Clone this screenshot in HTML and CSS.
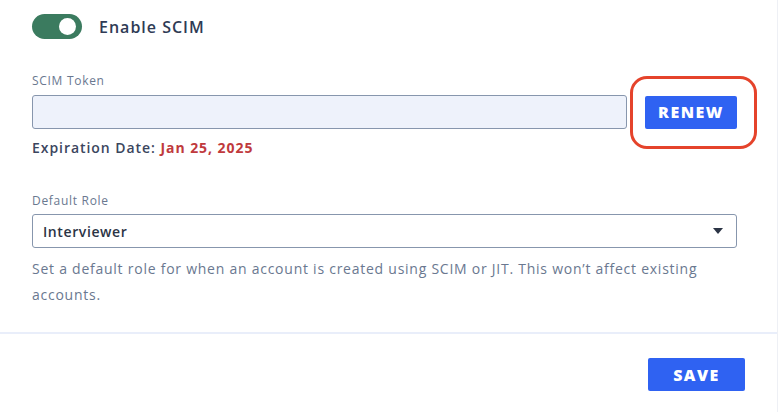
FILE: index.html
```html
<!DOCTYPE html>
<html lang="en">
<head>
<meta charset="utf-8">
<title>SCIM Settings</title>
<link rel="stylesheet" href="styles.css">
</head>
<body>
<div class="panel">
  <section class="body">
    <div class="toggle-row">
      <span class="switch"><span class="knob"></span></span>
      <span class="toggle-label">Enable SCIM</span>
    </div>

    <div class="field token-field">
      <label class="field-label">SCIM Token</label>
      <div class="token-row">
        <div class="token-input"></div>
        <div class="renew-wrap">
          <button class="btn btn-renew">RENEW</button>
          <span class="highlight"></span>
        </div>
      </div>
      <div class="expiry">Expiration Date: <span class="expiry-date">Jan 25, 2025</span></div>
    </div>

    <div class="field role-field">
      <label class="field-label">Default Role</label>
      <div class="select">
        <span class="select-value">Interviewer</span>
        <svg class="caret" width="10" height="6" viewBox="0 0 10 6"><path d="M0 0h10L5 6z" fill="#2b3445"/></svg>
      </div>
      <p class="help">Set a default role for when an account is created using SCIM or JIT. This won’t affect existing accounts.</p>
    </div>
  </section>
  <footer class="footer">
    <button class="btn btn-save">SAVE</button>
  </footer>
</div>
</body>
</html>
```

FILE: styles.css
```css
html, body {
  margin: 0;
  padding: 0;
  background: #ffffff;
}

body {
  font-family: "Open Sans", "Lato", sans-serif;
  color: #2f3b55;
}

.panel {
  width: 778px;
  height: 412px;
  border-right: 1px solid #eef0f5;
  box-sizing: border-box;
  display: flex;
  flex-direction: column;
}

.body {
  padding: 14px 40px 24px 32px;
  border-bottom: 2px solid #e9eefa;
}

/* toggle */
.toggle-row {
  display: flex;
  align-items: center;
  height: 25px;
}

.switch {
  width: 50px;
  height: 25px;
  border-radius: 13px;
  background: #3b7b5f;
  display: flex;
  align-items: center;
  justify-content: flex-end;
  padding-right: 6px;
  box-sizing: border-box;
}

.knob {
  width: 17px;
  height: 17px;
  border-radius: 50%;
  background: #ffffff;
}

.toggle-label {
  margin-left: 17px;
  font-size: 16px;
  font-weight: 600;
  color: #2f3b55;
  letter-spacing: 1px;
}

/* fields */
.token-field {
  margin-top: 35px;
}

.field-label {
  display: block;
  font-size: 12px;
  color: #6a7890;
  letter-spacing: 0.7px;
  line-height: 14px;
}

.token-row {
  display: flex;
  align-items: center;
  margin-top: 7px;
}

.token-input {
  width: 595px;
  height: 34px;
  box-sizing: border-box;
  background: #eef2fb;
  border: 1px solid #8796ad;
  border-radius: 3px;
}

.renew-wrap {
  margin-left: 18px;
  position: relative;
}

/* outline drawn around the renew button */
.highlight {
  position: absolute;
  left: -15px;
  right: -20px;
  top: -20px;
  bottom: -20px;
  border: 3px solid #e5432b;
  border-radius: 17px;
  pointer-events: none;
}

.btn {
  font-family: "Open Sans", "Lato", sans-serif;
  font-weight: 800;
  color: #ffffff;
  background: #2f62f2;
  border: none;
  border-radius: 2px;
  letter-spacing: 1.5px;
  cursor: pointer;
  padding: 0;
}

.btn-renew {
  display: block;
  width: 92px;
  height: 33px;
  font-size: 16px;
}

.expiry {
  margin-top: 10px;
  font-size: 14px;
  line-height: 18px;
  font-weight: 600;
  color: #3b465e;
  letter-spacing: 0.95px;
}

.expiry-date {
  color: #c03a3d;
  font-weight: 700;
}

.role-field {
  margin-top: 37px;
}

.select {
  margin-top: 6px;
  width: 705px;
  height: 34px;
  box-sizing: border-box;
  border: 1px solid #8796ad;
  border-radius: 3px;
  display: flex;
  align-items: center;
  justify-content: space-between;
  padding: 0 13px 0 10px;
}

.select-value {
  font-size: 14px;
  font-weight: 600;
  color: #2b3445;
  letter-spacing: 0.6px;
}

.help {
  margin: 8px 0 0;
  font-size: 14px;
  line-height: 26px;
  color: #6a7890;
  letter-spacing: 0.75px;
  width: 705px;
}

/* footer */
.footer {
  display: flex;
  justify-content: flex-end;
  padding: 24px 32px 0 0;
}

.btn-save {
  width: 97px;
  height: 33px;
  font-size: 16px;
}
```
